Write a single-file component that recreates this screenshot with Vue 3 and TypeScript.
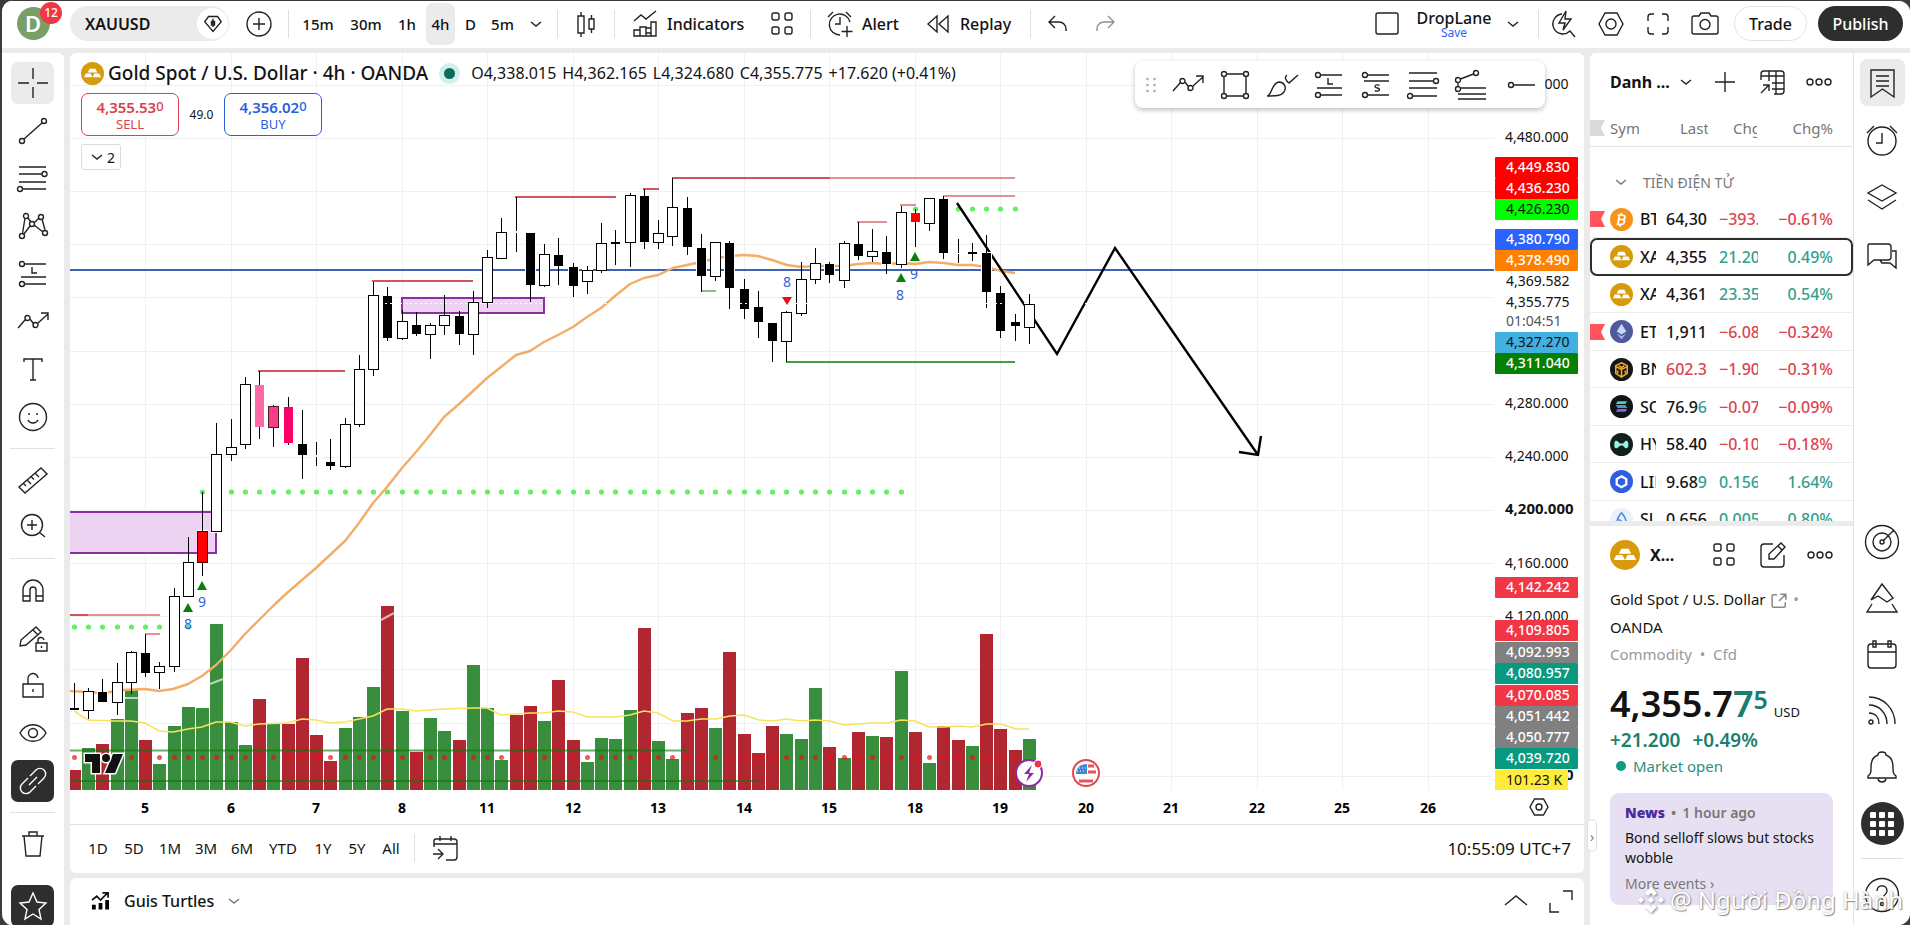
<script setup lang="ts">
type Candle = [number, number, number, number, string]

const c = (x: number, y: number, r: number): string =>
  `M${x - r} ${y}a${r} ${r} 0 1 0 ${2 * r} 0a${r} ${r} 0 1 0 ${-2 * r} 0`

const icons: Record<string, string> = {
  gem: 'M10 6h12l5 7-11 13L5 13z M16 9v11 M14 13v4M18 13v4M13 15h6M14 12.500h4v5h-4z',
  plusCircle: c(16, 16, 12) + 'M16 10v12M10 16h12',
  chevron: 'M11 14l5 4 5-4',
  chevronWide: 'M5 20l11-9 11 9',
  candles: 'M8 8h6v17H8zM11 4v4M11 25v4M19 11h5v10h-5zM21.500 7v4M21.500 21v4',
  indicators: 'M5 13l7-6 5 4 10-8M5 28v-6h6v6zM11 28v-9h6v9zM17 25h5M17 28V20h5v8zM22 28V14h5v14z',
  grid: 'M8 5h3a2 2 0 0 1 2 2v3a2 2 0 0 1-2 2H8a2 2 0 0 1-2-2V7a2 2 0 0 1 2-2zM21 5h3a2 2 0 0 1 2 2v3a2 2 0 0 1-2 2h-3a2 2 0 0 1-2-2V7a2 2 0 0 1 2-2zM8 19h3a2 2 0 0 1 2 2v3a2 2 0 0 1-2 2H8a2 2 0 0 1-2-2v-3a2 2 0 0 1 2-2zM21 19h3a2 2 0 0 1 2 2v3a2 2 0 0 1-2 2h-3a2 2 0 0 1-2-2v-3a2 2 0 0 1 2-2z',
  alertPlus: 'M26 14A10.500 10.500 0 1 0 16 27M16 9v7h-5M4 9l5-5M27 9l-5-5M23 18v11M17.500 23.500h11',
  alarm: c(16, 17, 14) + 'M16 9v10h-6M1 9l7-7M31 9l-7-7',
  replay: 'M15 8v16L6 16zM26 8v16l-9-8z',
  undo: 'M13 8l-6 6 6 6M7 14h10a7 7 0 0 1 7 7v2',
  redo: 'M19 8l6 6-6 6M25 14H15a7 7 0 0 0-7 7v2',
  layout: 'M6 5h18a2 2 0 0 1 2 2v17a2 2 0 0 1-2 2H6a2 2 0 0 1-2-2V7a2 2 0 0 1 2-2z',
  quick: 'M14 6A10 10 0 1 0 22 23l5 6M18 3l-7 12h6l-2 7 8-11h-6z',
  hex: 'M10 5h12l6 11-6 11H10L4 16z' + c(16, 16, 5),
  hexSmall: 'M11.500 8h9l4.500 8-4.500 8h-9L7 16z' + c(16, 16, 3),
  full: 'M12 6H9a3 3 0 0 0-3 3v4M20 6h3a3 3 0 0 1 3 3v4M12 26H9a3 3 0 0 1-3-3v-4M20 26h3a3 3 0 0 0 3-3v-4',
  camera: 'M5 8h5l2-3h8l2 3h5a2 2 0 0 1 2 2v14a2 2 0 0 1-2 2H5a2 2 0 0 1-2-2V10a2 2 0 0 1 2-2z' + c(16, 16.5, 5),
  cross: 'M1 16h11M20 16h11M16 1v11M16 20v11',
  trend: c(5, 26, 2.5) + c(27, 6, 2.5) + 'M7 24L25 8',
  fib: 'M2 5h27M2 12h23M2 20h27M5 27h24' + c(27.5, 12, 2.5) + c(3, 27, 2.5),
  pattern: c(5, 26, 2.5) + c(9, 6, 2.5) + c(15, 14, 2.5) + c(24, 7, 2.5) + c(28, 23, 2.5) + 'M5.500 23.500L8 8M11 8l3 4M7 24l6-8M17 13l5-5M17 15l9 7M25 9l3 11',
  long: c(5, 6, 2.5) + c(5, 26, 2.5) + 'M8 6h21M4 19h25M8 26h21M15 9v6h5',
  short: c(5, 6, 2.5) + c(5, 26, 2.5) + 'M8 6h21M4 12h25M8 26h21M19.500 16.500c-1-1-4.500-1-4.500 1s4.500 1 4.500 3-3.500 2-4.500 1',
  wave: 'M1 22l7-8M12.500 12.500l4 5M21 17l10-9M24 7h7v7' + c(10.5, 12, 2.5) + c(18.5, 19, 2.5),
  text: 'M7 9V6h18v3M16 6v21M13 27h6',
  smile: c(16, 16, 13.5) + 'M11 19c2 4 8 4 10 0M12 12v2M20 12v2',
  ruler: 'M2 23L24 4l6 6L8 29zM6 19l3 3M10 16l4 4M14 12.500l3 3M18 9l4 4',
  zoom: c(15, 15, 10.5) + 'M22 22l6 5M10 15h10M15 10v10',
  magnet: 'M6 27V16a10 10 0 0 1 20 0v11h-7V16a3 3 0 0 0-6 0v11zM6 22h7M19 22h7',
  pencil: 'M3 24l1-6L19 5l5 5L9 23zM16 8l5 5M19 21h11v8H19zM21 21v-2a3 3 0 0 1 6-1M24.500 24v2',
  lock: 'M6 14h20v13H6zM11 14V9a5 5 0 0 1 10-1M16 19v3',
  eye: 'M3 16c6-11 20-11 26 0-6 11-20 11-26 0z' + c(16, 16, 4.5),
  link: 'M13 11l6-6a5.500 5.500 0 0 1 8 8l-6 6M19 21l-6 6a5.500 5.500 0 0 1-8-8l6-6M12 20l8-8',
  trash: 'M5 8h22M7 8l2 20h14l2-20M12 8V4h8v4',
  star: 'M16 3l4 9 9 1-7 6.500 2 9.500-8-5-8 5 2-9.500L3 13l9-1z',
  rect: c(5, 5, 2.5) + c(27, 5, 2.5) + c(5, 27, 2.5) + c(27, 27, 2.5) + 'M8 5h16M8 27h16M5 8v16M27 8v16',
  brush: 'M1 27c5 0 4-13 12-14 5 0 8 5 5 10-3 4-8 4-17 4zM21 6c-3 2-1 6 2 8L32 6',
  channel: 'M2 4h28M2 12h25M2 19h28M5 27h25' + c(29, 12, 2.5) + c(3, 27, 2.5),
  speed: c(22, 4, 2.5) + c(4, 11, 2.5) + c(4, 20, 2.5) + 'M6.500 10l13-5M4 13.500v4M6.500 19H32M4 25h28M4 30h28',
  ray: c(10, 16, 2.5) + 'M12.500 16H34',
  plus: 'M16 6v20M6 16h20',
  table: 'M5 14V8a3 3 0 0 1 3-3h17a3 3 0 0 1 3 3v17a3 3 0 0 1-3 3h-7M5 10h23M13 5v10M20 5v23M28 17H16M28 23H16M5 27l8-8M7 19h6v6',
  more: c(7, 16, 3) + c(16, 16, 3) + c(25, 16, 3),
  bookmark: 'M5 3h23v27l-11.500-8L5 30zM10 9h13M10 14h13M10 19h13',
  layers: 'M16 4l14 8-14 8-14-8zM2 19l14 9 14-9',
  chat: 'M3 6h19a3 3 0 0 1 3 3v10a3 3 0 0 1-3 3H8l-6 5V7zM26 13h4v17l-6-5H16l-2-3',
  target: c(16, 16, 16.5) + c(16, 16, 9) + c(16, 16, 2) + 'M17 15L28 4',
  ideas: 'M16 2L5 18l7-4 9 6 6-4zM6 22L1 30h30l-5-8',
  calendar: 'M5 6h22a3 3 0 0 1 3 3v18a3 3 0 0 1-3 3H5a3 3 0 0 1-3-3V9a3 3 0 0 1 3-3zM2 14h28M7 3h3v6H7zM22 3h3v6h-3z',
  rss: 'M3 3c15 0 26 12 26 27M3 11c11 0 18 9 18 19M3 19c7 0 10 5 10 11' + c(5, 28, 2),
  bell: 'M2 26c3-2 3-4 3-9 0-8 4-11 7-12 0-4 8-4 8 0 3 1 7 4 7 12 0 5 0 7 3 9v2H2zM12 29c1 4 7 4 8 0',
  help: c(16, 16, 16.5) + 'M11 12c0-7 10-7 10 0 0 4-5 4-5 9' + c(16, 25, 1.5),
  edit: 'M17 5H8a3 3 0 0 0-3 3v17a3 3 0 0 0 3 3h17a3 3 0 0 0 3-3v-9M13 20v-5L25 4l4 4-11 12zM22 7l4 4',
  goto: 'M5 15V9a2 2 0 0 1 2-2h18a3 3 0 0 1 3 3v15a3 3 0 0 1-3 3h-8M5 12h23M11 4v5M22 4v5M4 22h9M9 17l5 5-5 5',
  external: 'M13 6H7a2 2 0 0 0-2 2v16a2 2 0 0 0 2 2h17a2 2 0 0 0 2-2v-6M18 5h9v9M27 5L16 16',
  expand: 'M18 6h9v9M5 18v9h9',
}

const intervals = ['15m', '30m', '1h', '4h', 'D', '5m']
const toolGroups: string[][] = [
  ['cross', 'trend', 'fib', 'pattern', 'long', 'wave', 'text', 'smile'],
  ['ruler', 'zoom'],
  ['magnet', 'pencil', 'lock', 'eye', 'link'],
  ['trash'],
  ['star'],
]
const favourites = ['wave', 'rect', 'brush', 'long', 'short', 'channel', 'speed', 'ray']
const ranges = ['1D', '5D', '1M', '3M', '6M', 'YTD', '1Y', '5Y', 'All']
const days = [5, 6, 7, 8, 11, 12, 13, 14, 15, 18, 19, 20, 21, 22, 25, 26]

const xAt = (i: number): number => 74.3 + i * 14.254
const px = (i: number): number => Math.floor(xAt(i))
const dayX = (i: number): number => px(5 + i * 6)
const gridRows = Array.from({ length: 14 }, (_, i) => Math.floor(85.3 + i * 53.15))

/* high, body top, body bottom, low, kind */
const candles: Candle[] = [
  [683, 708, 710, 710, 'k'], [688, 691, 711, 719, 'w'], [679, 692, 702, 702, 'k'], [663, 682, 703, 715, 'w'],
  [651, 652, 683, 694, 'w'], [634, 653, 673, 677, 'k'], [662, 666, 673, 689, 'w'], [588, 596, 667, 672, 'w'],
  [537, 562, 597, 597, 'w'], [492, 531, 563, 576, 'red'], [423, 454, 532, 532, 'w'], [419, 447, 455, 461, 'w'],
  [377, 384, 445, 449, 'w'], [371, 385, 427, 439, 'p1'], [405, 406, 428, 447, 'p2'], [397, 407, 443, 445, 'p3'],
  [410, 444, 455, 479, 'k'], [442, 455, 457, 466, 'n'], [439, 462, 466, 470, 'k'], [418, 424, 467, 468, 'w'],
  [355, 369, 425, 427, 'w'], [282, 295, 370, 376, 'w'], [287, 296, 338, 341, 'k'], [310, 321, 339, 340, 'w'],
  [312, 325, 334, 336, 'k'], [323, 325, 335, 359, 'w'], [295, 315, 326, 335, 'w'], [311, 316, 334, 345, 'k'],
  [291, 302, 335, 355, 'w'], [250, 257, 303, 308, 'w'], [218, 232, 259, 259, 'w'], [197, 231, 233, 252, 'n'],
  [233, 233, 285, 302, 'k'], [244, 254, 286, 287, 'w'], [238, 255, 266, 285, 'k'], [263, 267, 286, 297, 'k'],
  [266, 270, 282, 294, 'w'], [223, 243, 271, 273, 'w'], [230, 242, 244, 265, 'k'], [193, 195, 243, 267, 'w'],
  [189, 196, 242, 249, 'k'], [220, 233, 243, 249, 'w'], [178, 207, 237, 246, 'w'], [197, 208, 247, 255, 'k'],
  [234, 248, 276, 292, 'k'], [242, 242, 277, 281, 'w'], [241, 243, 288, 309, 'k'], [279, 289, 309, 319, 'k'],
  [291, 307, 322, 338, 'k'], [323, 323, 341, 362, 'k'], [311, 312, 342, 362, 'w'], [262, 279, 314, 316, 'w'],
  [248, 263, 280, 284, 'w'], [262, 264, 275, 283, 'k'], [241, 243, 281, 288, 'w'], [222, 244, 256, 260, 'k'],
  [229, 251, 257, 262, 'w'], [236, 252, 264, 274, 'k'], [206, 212, 265, 268, 'w'], [209, 213, 222, 247, 'redk'],
  [198, 198, 224, 231, 'w'], [196, 199, 253, 259, 'k'], [239, 253, 254, 263, 'n'], [243, 252, 254, 261, 'k'],
  [235, 253, 292, 308, 'k'], [286, 293, 331, 338, 'k'], [314, 322, 326, 341, 'k'], [294, 304, 328, 344, 'w'],
]
const outlined = (k: string): boolean => k === 'w' || k === 'red' || k === 'p2'

const volumeTops = [
  770, 748, 744, 719, 689, 740, 764, 726, 707, 708, 624, 722, 745, 699, 723, 724, 658, 735, 761, 728, 717, 687, 606,
  711, 752, 718, 731, 740, 665, 708, 760, 715, 706, 721, 680, 740, 762, 738, 739, 710, 628, 741, 759, 713, 708, 728,
  652, 734, 753, 726, 734, 739, 688, 747, 758, 732, 736, 737, 671, 732, 763, 726, 740, 746, 634, 729, 750, 739,
]
const volumeSides = 'rgrggrgggggggrgrrrrgggrgrggrgggrrgrrggggrggrrgrrrrgggrgrgrgrgrrgrrrg'

const dots: [number, number][] = [
  ...[0, 1, 2, 3, 4, 5, 6, 8].map((i): [number, number] => [i, 627]),
  [9, 492],
  ...Array.from({ length: 48 }, (_, k): [number, number] => [k + 11, 492]),
  ...[59, 62, 63, 64, 65, 66].map((i): [number, number] => [i, 209]),
]

/* x1, x2, y, class */
const levels: [number, number, number, string][] = [
  [258, 345, 371, 'high'], [70, 88, 615, 'high'], [88, 160, 615, 'soft'], [145, 160, 634, 'soft'],
  [372, 473, 281, 'high'], [515, 616, 197, 'high'], [643, 659, 189, 'high'], [672, 830, 178, 'high'],
  [830, 1015, 178, 'soft'], [857, 887, 222, 'soft'], [900, 916, 205, 'soft'], [943, 1015, 196, 'soft'],
  [701, 716, 291, 'lowsoft'], [786, 1015, 362, 'low'],
]

const average =
  '70,691 103,693 123,690 145,689 159,691 173,689 188,684 202,676 216,665 230,651 245,634 259,620 273,606 287,593 302,580 316,568 330,555 345,541 359,523 373,503 387,487 402,468 416,452 430,435 444,417 459,404 473,391 487,378 501,367 516,355 530,351 544,342 558,335 573,327 587,317 601,308 615,296 630,284 644,278 658,275 673,268 687,265 701,262 717,258 730,256 744,255 758,256 772,260 787,265 801,267 815,266 830,266 844,266 858,264 872,263 886,264 901,263 915,264 929,262 944,263 958,265 972,265 986,267 1001,271 1015,273'
const volumeAverage =
  '74,711 88,720 116,721 131,721 145,723 159,731 173,732 188,729 202,727 216,722 230,722 245,726 259,724 287,723 302,719 316,720 330,723 345,722 373,716 387,709 402,709 416,711 444,709 473,708 487,708 501,715 530,713 544,713 558,711 573,712 587,717 615,717 630,715 644,711 658,713 673,721 687,721 701,719 716,719 730,716 744,715 759,720 773,721 786,719 801,721 815,720 830,721 844,725 858,724 873,723 887,723 901,720 915,721 929,727 944,727 958,726 972,727 987,724 1001,724 1016,729 1029,729'

/* text, centre y, background, text colour */
const priceTags: [string, number, string, string][] = [
  ['4,449.830', 167, '#ff0000', '#fff'], ['4,436.230', 188, '#ff0000', '#fff'], ['4,426.230', 209, '#00ff00', '#111'],
  ['4,380.790', 239, '#2962ff', '#fff'], ['4,378.490', 260, '#ff8000', '#fff'], ['4,369.582', 281, '#fff', '#111'],
  ['4,355.775', 302, '#fff', '#111'], ['01:04:51', 321, '#fff', '#555'], ['4,327.270', 342, '#41b1e1', '#111'],
  ['4,311.040', 363, '#058005', '#fff'], ['4,142.242', 587, '#f23645', '#fff'], ['4,109.805', 630, '#f23645', '#fff'],
  ['4,092.993', 652, '#808080', '#fff'], ['4,080.957', 673, '#089981', '#fff'], ['4,070.085', 695, '#f23645', '#fff'],
  ['4,051.442', 716, '#808080', '#fff'], ['4,050.777', 737, '#808080', '#fff'], ['4,039.720', 758, '#089981', '#fff'],
]
const ticks: [string, number, boolean][] = [
  ['4,520.000', 84, false], ['4,480.000', 137, false], ['4,280.000', 403, false], ['4,240.000', 456, false],
  ['4,200.000', 509, true], ['4,160.000', 563, false], ['4,120.000', 616, false], ['4,000.000', 775, true],
]

interface Row { sym: string; icon: string; last: string; tail?: string; chg: string; pct: string; up: boolean; flag?: boolean; active?: boolean; lastDown?: boolean }
const rows: Row[] = [
  { sym: 'BTC', icon: 'btc', last: '64,30', chg: '−393.', pct: '−0.61%', up: false, flag: true },
  { sym: 'XAU', icon: 'gold', last: '4,355', chg: '21.20', pct: '0.49%', up: true, active: true },
  { sym: 'XAU', icon: 'gold', last: '4,361', chg: '23.35', pct: '0.54%', up: true },
  { sym: 'ETH', icon: 'eth', last: '1,911', chg: '−6.08', pct: '−0.32%', up: false, flag: true },
  { sym: 'BNB', icon: 'bnb', last: '602.3', chg: '−1.90', pct: '−0.31%', up: false, lastDown: true },
  { sym: 'SOL', icon: 'sol', last: '76.9', tail: '6', chg: '−0.07', pct: '−0.09%', up: false },
  { sym: 'HYP', icon: 'hype', last: '58.40', chg: '−0.10', pct: '−0.18%', up: false },
  { sym: 'LINK', icon: 'link', last: '9.68', tail: '9', chg: '0.156', pct: '1.64%', up: true },
  { sym: 'SUI', icon: 'sui', last: '0.656', chg: '0.005', pct: '0.80%', up: true },
]
const railTop = ['bookmark', 'alarm', 'layers', 'chat']
const railBottom = ['target', 'ideas', 'calendar', 'rss', 'bell']
</script>

<template>
  <div class="app">
    <header class="topbar">
      <button class="avatar" aria-label="Account"><span class="face">D</span><span class="badge">12</span></button>
      <div class="search">
        <button class="symbol">XAUUSD</button>
        <button class="gem" aria-label="Symbol type"><svg class="ic"><path :d="icons.gem" /></svg></button>
      </div>
      <button class="b59" aria-label="Compare"><svg class="ic"><path :d="icons.plusCircle" /></svg></button>
      <i class="sep"></i>
      <nav class="intervals">
        <button v-for="t in intervals" :key="t" :class="['iv', 'iv-' + t, { on: t === '4h' }]">{{ t }}</button>
        <button class="b30" aria-label="More intervals"><svg class="ic"><path :d="icons.chevron" /></svg></button>
      </nav>
      <i class="sep"></i>
      <button class="b56" aria-label="Chart type"><svg class="ic"><path :d="icons.candles" /></svg></button>
      <i class="sep"></i>
      <button class="labelled indicators"><svg class="ic"><path :d="icons.indicators" /></svg>Indicators</button>
      <button class="b56" aria-label="Templates"><svg class="ic"><path :d="icons.grid" /></svg></button>
      <i class="sep"></i>
      <button class="labelled alert"><svg class="ic"><path :d="icons.alertPlus" /></svg>Alert</button>
      <button class="labelled replay"><svg class="ic"><path :d="icons.replay" /></svg>Replay</button>
      <i class="sep"></i>
      <button class="b48 undo" aria-label="Undo"><svg class="ic"><path :d="icons.undo" /></svg></button>
      <button class="b48 faded" aria-label="Redo"><svg class="ic"><path :d="icons.redo" /></svg></button>
      <div class="right">
        <button class="b48" aria-label="Layout"><svg class="ic"><path :d="icons.layout" /></svg></button>
        <button class="saved"><span>DropLane</span><small>Save</small></button>
        <button class="b30" aria-label="Manage layouts"><svg class="ic"><path :d="icons.chevron" /></svg></button>
        <i class="sep"></i>
        <button class="b48" aria-label="Quick search"><svg class="ic"><path :d="icons.quick" /></svg></button>
        <button class="b48" aria-label="Settings"><svg class="ic"><path :d="icons.hex" /></svg></button>
        <button class="b48" aria-label="Fullscreen"><svg class="ic"><path :d="icons.full" /></svg></button>
        <button class="b48" aria-label="Snapshot"><svg class="ic"><path :d="icons.camera" /></svg></button>
        <button class="pill trade">Trade</button>
        <button class="pill publish">Publish</button>
      </div>
    </header>

    <div class="body">
      <aside class="tools">
        <div v-for="(g, gi) in toolGroups" :key="gi" :class="['group', 'g' + gi]">
          <button v-for="t in g" :key="t" :aria-label="t" :class="{ lit: t === 'cross', dark: t === 'link' || t === 'star' }">
            <svg class="ic"><path :d="icons[t]" /></svg>
          </button>
        </div>
      </aside>

      <main class="centre">
        <section class="chart">
          <div class="plotrow">
            <div class="plot">
              <svg class="canvas" role="img" aria-label="Gold Spot candles">
                <g transform="translate(-70 -53)">
                  <g class="grid">
                    <path v-for="(d, i) in days" :key="d" :d="`M${dayX(i)}.5 53V790`" />
                    <path v-for="y in gridRows" :key="y" :d="`M70 ${y}.5H3000`" />
                  </g>
                  <rect class="zone" x="60" y="512" width="156" height="41" />
                  <rect class="zone" x="402" y="298" width="142" height="15" />
                  <rect
                    v-for="(t, i) in volumeTops" :key="'v' + i" :class="volumeSides[i] === 'g' ? 'vg' : 'vr'"
                    :x="px(i) - 6" :y="t" width="13" :height="790 - t"
                  />
                  <path class="faint" d="M124 698h14M210 684l13-5M381 620l13-7" />
                  <path class="volline" d="M70 750.500H687M70 781H759" />
                  <circle v-for="i in 67" :key="'r' + i" class="reddot" :cx="px(i - 1) + 0.5" cy="757.5" r="2.5" />
                  <polyline class="vma" :points="volumeAverage" />
                  <circle v-for="(d, i) in dots" :key="'d' + i" class="greendot" :cx="px(d[0]) + 0.5" :cy="d[1]" r="2.6" />
                  <path v-for="(l, i) in levels" :key="'l' + i" :class="['level', l[3]]" :d="`M${l[0]} ${l[2]}H${l[1]}`" />
                  <path class="blue" d="M70 270H3000" />
                  <polyline class="ma" :points="average" />
                  <path class="drawn" d="M957 203L1057 354L1115 248L1258 455M1239 452L1258 455L1261 436" />
                  <g v-for="(k, i) in candles" :key="'c' + i" :class="['candle', k[4]]">
                    <rect class="halo" :x="px(i) - 5" :y="k[1] - 1" width="11" :height="k[2] - k[1] + 2" />
                    <path :d="`M${px(i) + 0.5} ${k[0]}V${k[1]}M${px(i) + 0.5} ${k[2]}V${k[3]}`" />
                    <rect
                      v-if="outlined(k[4])" class="bodyrect" :x="px(i) - 4.5" :y="k[1] + 0.5" width="10"
                      :height="k[2] - k[1] - 1"
                    />
                    <rect v-else class="bodyrect" :x="px(i) - 4" :y="k[1]" width="9" :height="k[2] - k[1]" />
                  </g>
                  <path class="lastprice" d="M70 303.500H3000" />
                  <g class="up">
                    <path d="M202 581l5 9h-10zM188 603l5 9h-10zM915 252l5 9h-10zM901 273l5 9h-10z" />
                  </g>
                  <path class="down" d="M787 305l5-8h-10z" />
                  <g class="count">
                    <text x="202" y="607">9</text><text x="188" y="629">8</text><text x="787" y="287">8</text>
                    <text x="914" y="279">9</text><text x="900" y="300">8</text>
                  </g>
                  <g class="brand">
                    <path d="M85 754h15v19h-8v-11h-7zM113 754h10l-8 19h-10z" />
                    <circle cx="106" cy="758" r="4" />
                  </g>
                  <g class="bolt">
                    <circle cx="1029" cy="773" r="13" />
                    <path d="M1032 765l-8 9h5l-3 8 8-9h-5z" />
                    <circle class="notify" cx="1038" cy="764" r="4" />
                  </g>
                  <g class="flag">
                    <circle cx="1086" cy="773" r="13" />
                    <path class="stripes" d="M1088 766h6M1088 772h8M1079 781h14" />
                    <path class="canton" d="M1076 774c0-6 4-10 11-10v10z" />
                    <path class="stars" d="M1079 768h7M1077 771h9" />
                  </g>
                </g>
              </svg>

              <div class="legend">
                <div class="titleline">
                  <svg class="gold" viewBox="0 0 24 24"><circle cx="12" cy="12" r="12" /><path d="M9 7h6l2 4H7zM5 12h5l2 4H3zM14 12h5l2 4h-9z" /></svg>
                  <h1>Gold Spot / U.S. Dollar · 4h · OANDA</h1>
                  <span class="status"></span>
                  <p class="ohlc"><span>O4,338.015</span><span>H4,362.165</span><span>L4,324.680</span><span>C4,355.775</span><span>+17.620 (+0.41%)</span></p>
                </div>
                <div class="deal">
                  <button class="sell"><b>4,355.53<sup>0</sup></b><span>SELL</span></button>
                  <span class="spread">49.0</span>
                  <button class="buy"><b>4,356.02<sup>0</sup></b><span>BUY</span></button>
                </div>
                <button class="collapse"><svg class="ic"><path :d="icons.chevron" /></svg>2</button>
              </div>
            </div>

            <svg class="axis" role="img" aria-label="Price scale">
              <g transform="translate(-1494 -53)">
                <text v-for="t in ticks" :key="t[0]" :class="{ strong: t[2] }" x="1505" :y="t[1] + 5">{{ t[0] }}</text>
                <g v-for="t in priceTags" :key="t[0]">
                  <rect x="1495" :y="t[1] - 10" width="83" height="21" rx="1" :fill="t[2]" />
                  <text x="1506" :y="t[1] + 5" :fill="t[3]">{{ t[0] }}</text>
                </g>
                <rect x="1495" y="770" width="73" height="20" fill="#ffeb3b" />
                <text x="1506" y="785">101.23 K</text>
              </g>
            </svg>

            <div class="favbar">
              <svg class="grip" viewBox="0 0 10 16"><circle v-for="n in 6" :key="n" :cx="n % 2 ? 1.5 : 8.5" :cy="Math.floor((n - 1) / 2) * 6 + 2" r="1.3" /></svg>
              <button v-for="f in favourites" :key="f" :aria-label="f"><svg class="ic"><path :d="icons[f]" /></svg></button>
            </div>
          </div>

          <div class="timeaxis">
            <svg class="times" role="img" aria-label="Time scale">
              <text v-for="(d, i) in days" :key="d" :x="dayX(i) - 70" y="23">{{ d }}</text>
            </svg>
            <button aria-label="Scale settings"><svg class="ic"><path :d="icons.hexSmall" /></svg></button>
          </div>

          <footer class="rangebar">
            <button v-for="r in ranges" :key="r" :class="['range', 'r' + r]">{{ r }}</button>
            <i class="sep"></i>
            <button class="b48" aria-label="Go to date"><svg class="ic"><path :d="icons.goto" /></svg></button>
            <button class="clock">10:55:09 UTC+7</button>
          </footer>
        </section>

        <section class="strategy">
          <svg class="strategyicon" viewBox="0 0 20 20"><path d="M1 14h4v5H1zM8 12h4v7H8zM15 9h4v10h-4z" /><path class="stroke" d="M1 9l5-4 4 4 7-7M12 1.500h6v5" /></svg>
          <button class="name">Guis Turtles<svg class="ic"><path :d="icons.chevron" /></svg></button>
          <span class="fill"></span>
          <button aria-label="Open panel"><svg class="ic"><path :d="icons.chevronWide" /></svg></button>
          <button aria-label="Maximize panel"><svg class="ic"><path :d="icons.expand" /></svg></button>
        </section>
      </main>

      <aside class="side">
        <div class="panel">
          <section class="watch">
            <div class="watchhead">
              <button class="listname">Danh ...</button>
              <svg class="ic"><path :d="icons.chevron" /></svg>
              <button aria-label="Add symbol"><svg class="ic"><path :d="icons.plus" /></svg></button>
              <button aria-label="Table view"><svg class="ic"><path :d="icons.table" /></svg></button>
              <button aria-label="More"><svg class="ic"><path :d="icons.more" /></svg></button>
            </div>
            <table>
              <thead>
                <tr>
                  <th class="c1"><svg class="pin grey" viewBox="0 0 15 16"><path d="M0 0h15l-4 8 4 8H0z" /></svg></th>
                  <th class="c2"><div class="clip symhead">Sym</div></th>
                  <th class="c3"><div class="clip lasthead">Last</div></th>
                  <th class="c4"><div class="clip chghead">Chg</div></th>
                  <th class="c5">Chg%</th>
                </tr>
              </thead>
              <tbody>
                <tr class="section"><td colspan="5"><button><svg class="ic"><path :d="icons.chevron" /></svg>TIỀN ĐIỆN TỬ</button></td></tr>
                <tr v-for="(r, i) in rows" :key="i" :class="['quote', r.up ? 'rise' : 'fall', { active: r.active }]">
                  <td class="c1">
                    <div class="mark">
                      <svg class="pin" viewBox="0 0 15 16"><path v-if="r.flag" d="M0 0h15l-4 8 4 8H0z" /></svg>
                      <svg class="coin" viewBox="0 0 24 24">
                        <template v-if="r.icon === 'btc'"><circle cx="12" cy="12" r="12" fill="#f7931a" /><path d="M10 7l-2 10M8 7.500h5c4 0 3 4.500 0 4.500H9.500M12 12c5 0 3 5 0 5H7M12 5l-.5 2.500M11 17l-.5 2.500" class="coinline" /></template>
                        <template v-else-if="r.icon === 'gold'"><circle cx="12" cy="12" r="12" fill="#d79a0b" /><path d="M9 7h6l2 4H7zM5 12h5l2 4H3zM14 12h5l2 4h-9z" fill="#fff" /></template>
                        <template v-else-if="r.icon === 'eth'"><circle cx="12" cy="12" r="12" fill="#4f5a9c" /><path d="M12 4l5 8-5 3-5-3z" fill="#c9d6f5" /><path d="M7 14l5 3 5-3-5 6z" fill="#a6b9ec" /></template>
                        <template v-else-if="r.icon === 'bnb'"><circle cx="12" cy="12" r="12" fill="#171717" /><path d="M12 5l6 3v8l-6 4-6-4V8zM6 9l6 3 6-3M12 12v7M9 8l3 2 3-2M8 13v3M16 13v3" fill="none" stroke="#f0a92a" stroke-width="1.6" /></template>
                        <template v-else-if="r.icon === 'sol'"><circle cx="12" cy="12" r="12" fill="#101418" /><path d="M8 6.500h10l-2 3H6z" fill="#3fd6b0" /><path d="M6 10.500h10l2 3H8z" fill="#5a8fd8" /><path d="M8 14.500h10l-2 3H6z" fill="#7d6be0" /></template>
                        <template v-else-if="r.icon === 'hype'"><circle cx="12" cy="12" r="12" fill="#10201f" /><path d="M6 8c3 0 3 3 6 3s3-3 5-3c3 0 3 8 0 8-2 0-2-3-5-3s-3 3-6 3c-2 0-2-8 0-8z" fill="#9af0df" /></template>
                        <template v-else-if="r.icon === 'link'"><circle cx="12" cy="12" r="12" fill="#2f5fe0" /><path d="M12 6.500l5 3v5.500l-5 3-5-3V9.500z" fill="none" stroke="#fff" stroke-width="2.4" /></template>
                        <template v-else><circle cx="12" cy="12" r="12" fill="#e9f1fb" /><path d="M12 5c7 8 5 13 0 13s-7-5 0-13zM8 12c4 0 4 4 8 3" fill="none" stroke="#4d88e8" stroke-width="1.6" /></template>
                      </svg>
                    </div>
                  </td>
                  <td class="c2"><div class="clip sym">{{ r.sym }}</div></td>
                  <td class="c3"><div :class="['clip', { dn: r.lastDown }]">{{ r.last }}<span v-if="r.tail" class="tail">{{ r.tail }}</span></div></td>
                  <td class="c4 tone"><div class="clip chg">{{ r.chg }}</div></td>
                  <td class="c5 tone">{{ r.pct }}</td>
                </tr>
              </tbody>
            </table>
          </section>

          <section class="detail">
            <div class="detailhead">
              <svg class="gold big" viewBox="0 0 24 24"><circle cx="12" cy="12" r="12" /><path d="M9 7h6l2 4H7zM5 12h5l2 4H3zM14 12h5l2 4h-9z" /></svg>
              <h2>X...</h2>
              <button aria-label="Widgets"><svg class="ic"><path :d="icons.grid" /></svg></button>
              <button aria-label="Edit"><svg class="ic"><path :d="icons.edit" /></svg></button>
              <button aria-label="More"><svg class="ic"><path :d="icons.more" /></svg></button>
            </div>
            <p class="desc">Gold Spot / U.S. Dollar <svg class="ext" viewBox="0 0 32 32"><path :d="icons.external" /></svg> <span class="muted">•</span><br>OANDA</p>
            <p class="kind">Commodity&nbsp; • &nbsp;Cfd</p>
            <div class="price"><b>4,355.7<em>7</em></b><sup>5</sup><span>USD</span></div>
            <div class="change"><span>+21.200</span><span>+0.49%</span></div>
            <p class="open">Market open</p>
            <article class="news">
              <p class="newshead"><b>News</b><i>•</i><span>1 hour ago</span></p>
              <p>Bond selloff slows but stocks wobble</p>
              <a href="#">More events ›</a>
            </article>
          </section>
        </div>

        <nav class="rail">
          <div class="railtop">
            <button v-for="r in railTop" :key="r" :aria-label="r" :class="{ lit: r === 'bookmark' }"><svg class="ic"><path :d="icons[r]" /></svg></button>
          </div>
          <div class="railbottom">
            <button v-for="r in railBottom" :key="r" :aria-label="r"><svg class="ic"><path :d="icons[r]" /></svg></button>
            <button class="apps" aria-label="Products"><svg viewBox="0 0 24 24"><rect v-for="n in 9" :key="n" :x="((n - 1) % 3) * 9" :y="Math.floor((n - 1) / 3) * 9" width="6" height="6" rx="1" /></svg></button>
            <i class="rule"></i>
            <button aria-label="Help"><svg class="ic"><path :d="icons.help" /></svg></button>
          </div>
        </nav>
        <button class="handle" aria-label="Hide panel">›</button>
      </aside>
    </div>

    <div class="watermark">
      <svg viewBox="0 0 28 28"><path d="M14 1l6 6-3 3-3-3-3 3-3-3zM4 11l3 3-3 3-3-3zM14 11l3 3-3 3-3-3zM24 11l3 3-3 3-3-3zM8 21l3-3 3 3 3-3 3 3-6 6z" /></svg>
      <span>@ Người Đồng Hành</span>
    </div>
  </div>
</template>

<style>
html, body { background: #3b3b3b; }
body { overflow: hidden; }
</style>

<style scoped>
.app, .app * { box-sizing: border-box; }
.app {
  position: relative; height: 100vh; display: flex; flex-direction: column; gap: 5px; overflow: hidden;
  border: solid #3b3b3b; border-width: 1px 0 0 2px; border-radius: 12px; background: #ebebeb;
  color: #131313; font-family: "Noto Sans", "Open Sans", sans-serif; font-size: 15px;
}
button { padding: 0; border: 0; background: none; color: inherit; font: inherit; display: flex; align-items: center; justify-content: center; flex: none; }
p, h1, h2 { margin: 0; }
.ic { width: 32px; height: 32px; flex: none; overflow: visible; }
.ic path, .ext path { fill: none; stroke: #222; stroke-width: 1.4; }
.sep { width: 1px; height: 28px; background: #dedede; flex: none; }

.topbar { height: 47px; flex: none; display: flex; align-items: center; background: #fff; font-size: 16px; font-weight: 500; padding-bottom: 2px; }
.avatar { width: 68px; height: 45px; position: relative; }
.face { width: 33px; height: 33px; margin-right: 6px; border-radius: 50%; background: #789f66; color: #fff; font-size: 22px; font-weight: 600; line-height: 33px; }
.badge { position: absolute; top: 1px; right: 8px; width: 22px; height: 22px; border-radius: 50%; background: #f23645; color: #fff; font-size: 12px; line-height: 22px; }
.search { width: 159px; height: 35px; flex: none; display: flex; align-items: center; justify-content: space-between; padding: 0 1px 0 15px; border-radius: 18px; background: #ebebeb; }
.symbol { font-weight: 600; }
.gem { width: 31px; height: 31px; border-radius: 50%; background: #fff; }
.gem .ic { width: 24px; height: 24px; }
.gem .ic path { transform: scale(0.75); stroke-width: 1.8; }
.b59 { width: 59px; }
.b56 { width: 56px; }
.b48 { width: 47px; }
.b30 { width: 30px; }
.undo { margin-left: 3px; }
.faded { opacity: 0.5; }
.intervals { display: flex; align-items: center; padding: 0 6px 0 5px; }
.iv { height: 42px; width: 48px; border-radius: 7px; font-size: 15px; }
.iv-1h { width: 34px; }
.iv-4h { width: 29px; margin: 0 2px; }
.iv-D { width: 27px; }
.iv-5m { width: 37px; }
.iv.on { background: #ebebeb; }
.labelled { gap: 6px; justify-content: flex-start; }
.indicators { width: 139px; padding-left: 14px; }
.alert { width: 102px; padding-left: 13px; }
.replay { width: 117px; padding-left: 9px; }
.right { margin-left: auto; display: flex; align-items: center; padding-right: 7px; }
.saved { width: 86px; flex-direction: column; line-height: 18px; }
.saved small { font-size: 12px; line-height: 12px; color: #2962ff; font-weight: 400; }
.saved + .b30 { margin: 0 10px 0 1px; }
.right .sep + .b48 { margin-left: 1px; }
.pill { height: 35px; border-radius: 18px; }
.trade { width: 73px; margin: 0 11px 0 6px; border: 1px solid #e2e2e2; }
.publish { width: 85px; background: #2e2e2e; color: #fff; }

.body { flex: 1; min-height: 0; display: flex; gap: 6px; }
.tools { width: 62px; flex: none; background: #fff; border-radius: 0 6px 0 0; padding: 9px 1px 0 0; display: flex; flex-direction: column; align-items: center; }
.group { display: flex; flex-direction: column; justify-content: space-between; align-items: center; width: 45px; flex: none; }
.group button { width: 43px; height: 42px; border-radius: 7px; }
.g0 { height: 376px; }
.g1 { height: 111px; margin-top: 10px; padding: 10px 0 11px; border: solid #e0e0e0; border-width: 1px 0; }
.g2 { height: 253px; padding: 10px 0; }
.g3 { border-top: 1px solid #e0e0e0; padding: 10px 0 20px; }
.lit { background: #ebebeb; }
.dark { background: #2e2e2e; }
.dark .ic path { stroke: #fff; }

.centre { flex: 1; min-width: 0; display: flex; flex-direction: column; gap: 5px; }
.chart { flex: 1; min-height: 0; display: flex; flex-direction: column; background: #fff; border-radius: 6px; }
.plotrow { position: relative; flex: 1; min-height: 0; display: flex; }
.plot { position: relative; flex: 1; min-width: 0; overflow: hidden; border-radius: 6px 0 0 0; }
.canvas { position: absolute; inset: 0; width: 100%; height: 100%; }
.axis { width: 90px; height: 100%; flex: none; font-size: 14px; }
.axis text { fill: currentColor; }
.axis text[fill="#fff"] { fill: #fff; font-weight: 500; }
.axis text[fill="#555"] { fill: #555; }
.axis .strong { font-weight: 700; font-size: 15px; }
.grid path { stroke: #f0f0f0; fill: none; }
.zone { fill: #ebd3f1; stroke: #8e2da4; stroke-width: 2; }
.vg { fill: #388e3c; }
.vr { fill: #b02731; }
.faint { stroke: #fff; stroke-width: 2; opacity: 0.65; }
.volline { stroke: #0a7a0a; stroke-width: 2; opacity: 0.6; }
.reddot { fill: #ee1010; opacity: 0.7; }
.vma { fill: none; stroke: #f8e45c; stroke-width: 1.6; }
.greendot { fill: #63ee63; }
.level { stroke-width: 2; fill: none; }
.high { stroke: #d2555c; }
.soft { stroke: #e29296; }
.low { stroke: #43a047; }
.lowsoft { stroke: #84c087; }
.blue { stroke: #3b62b4; stroke-width: 2; }
.ma { fill: none; stroke: #f3ad68; stroke-width: 2.4; stroke-linejoin: round; }
.drawn { fill: none; stroke: #000; stroke-width: 2.4; }
.halo { fill: #fff; }
.candle path { stroke: #000; }
.bodyrect { fill: #000; }
.w .bodyrect { fill: #fff; stroke: #000; }
.n .bodyrect { fill: none; }
.red .bodyrect { fill: #ff0000; stroke: #500; }
.redk .bodyrect { fill: #ff0000; }
.p1 .bodyrect { fill: #ff69a5; }
.p2 .bodyrect { fill: #f93c85; stroke: #4a2020; }
.p3 .bodyrect { fill: #ff0068; }
.lastprice { stroke: #fff; stroke-dasharray: 2 3; }
.up { fill: #068006; }
.down { fill: #ef0e0e; }
.count { fill: #2f62d8; font-size: 14px; text-anchor: middle; }
.brand { fill: #111; stroke: #fff; stroke-width: 3; paint-order: stroke; }
.bolt circle { fill: #fff; stroke: #8b2ba3; stroke-width: 2; }
.bolt path { fill: #8b2ba3; }
.bolt .notify { fill: #f23645; stroke: #fff; stroke-width: 1; }
.flag circle { fill: #fff; stroke: #e0484f; stroke-width: 2; }
.stripes { stroke: #e5555c; stroke-width: 3; }
.canton { fill: #3f86cf; }
.stars { stroke: #fff; stroke-dasharray: 1 2; }

.legend { position: relative; padding: 7px 0 0 11px; display: flex; flex-direction: column; align-items: flex-start; }
.titleline { display: flex; align-items: center; height: 26px; margin-bottom: 7px; }
.gold { width: 23px; height: 23px; flex: none; margin-right: 4px; }
.gold circle { fill: #d79a0b; }
.gold path { fill: #fff; }
h1 { font-size: 19px; font-weight: 500; line-height: 26px; white-space: nowrap; }
.status { width: 21px; height: 21px; margin: 0 11px; border: 5px solid #d3efea; border-radius: 50%; background: #0c6b5e; }
.ohlc { display: flex; gap: 6px; font-size: 16px; white-space: nowrap; }
.deal { display: flex; align-items: center; }
.deal button { width: 98px; height: 43px; flex-direction: column; border: 1px solid; border-radius: 7px; background: #fff; font-size: 13px; line-height: 16px; }
.deal b { font-size: 15px; font-weight: 600; line-height: 18px; }
.deal sup { font-size: 13px; font-weight: 500; line-height: 0; vertical-align: 2px; }
.sell { color: #d8414d; }
.buy { color: #2a5fdc; }
.spread { width: 45px; text-align: center; font-size: 12px; }
.collapse { width: 40px; height: 26px; margin-top: 8px; border: 1px solid #dcdcdc; border-radius: 3px; background: #fff; font-size: 14px; }
.collapse .ic { width: 26px; margin-left: -6px; }
.favbar { position: absolute; top: 8px; right: 39px; display: flex; align-items: center; height: 47px; padding: 0 5px 0 11px; border-radius: 8px; background: #fff; box-shadow: 0 2px 5px rgba(0, 0, 0, 0.25); }
.favbar button { width: 47px; height: 44px; }
.grip { width: 10px; height: 16px; margin-right: 8px; fill: #aaa; }

.timeaxis { height: 35px; flex: none; display: flex; border-bottom: 1px solid #e3e3e3; }
.times { flex: 1; min-width: 0; height: 34px; font-size: 14px; font-weight: 700; text-anchor: middle; }
.timeaxis button { width: 90px; }
.rangebar { height: 48px; flex: none; display: flex; align-items: center; padding: 0 13px 2px 10px; font-size: 15px; }
.range { width: 36px; }
.range.rYTD { width: 46px; }
.range.r1Y, .range.r5Y, .range.rAll { width: 34px; }
.rangebar .sep { margin: 0 6px; }
.clock { margin-left: auto; font-size: 17px; }
.strategy { height: 47px; flex: none; display: flex; align-items: center; padding: 0 1px 2px 21px; border-radius: 6px 6px 0 0; background: #fff; }
.strategyicon { width: 19px; height: 20px; margin-right: 14px; }
.stroke { fill: none; stroke: #111; stroke-width: 1.8; }
.name { font-size: 16px; font-weight: 500; gap: 4px; }
.name .ic path { stroke: #777; }
.fill { flex: 1; }
.strategy > button:not(.name) { width: 45px; }

.side { position: relative; width: 320px; flex: none; display: flex; background: #fff; border-radius: 6px 0 0 0; }
.panel { width: 263px; flex: none; display: flex; flex-direction: column; gap: 5px; background: #ebebeb; border-radius: 6px 0 0 0; }
.watch { height: 468px; flex: none; overflow: hidden; background: #fff; border-radius: 6px 0 0 0; }
.watchhead { height: 57px; display: flex; align-items: center; padding-left: 20px; }
.listname { width: 60px; justify-content: flex-start; font-size: 16px; font-weight: 700; white-space: nowrap; }
.watchhead button:not(.listname) { width: 47px; }
.watchhead button:nth-of-type(2) { margin-left: 2px; }
.listname + .ic { width: 29px; }
table { width: 263px; table-layout: fixed; border-collapse: separate; border-spacing: 0; font-size: 16px; }
th { height: 37px; padding: 0; border-bottom: 1px solid #e3e3e3; font-weight: 400; color: #767676; text-align: left; font-size: 15px; }
td { padding: 0; font-weight: 500; }
.clip { overflow: hidden; white-space: nowrap; }
.c1 { width: 50px; }
.c2 { width: 26px; }
.c3 { width: 53px; }
.c4 { width: 49px; }
.c5 { width: 85px; text-align: right; padding-right: 20px; }
.c2 .clip { width: 16px; }
.c2 .symhead { width: 29px; margin-left: -30px; }
.c3 .clip { width: 46px; }
.c3 .lasthead { width: 28px; margin-left: 14px; }
.c4 .clip { width: 39px; }
.c4 .chghead { width: 24px; margin-left: 14px; }
.pin { width: 15px; height: 16px; flex: none; fill: #ff5459; display: block; }
.pin.grey { fill: #d9dadd; }
.section td { height: 54px; padding-top: 16px; font-weight: 400; }
.section button { margin-left: 15px; gap: 6px; color: #777; font-size: 14px; }
.section .ic path { stroke: #777; }
.quote td { height: 38px; border-bottom: 1px solid #ededed; }
.quote:nth-child(even) td { height: 37px; }
.mark { display: flex; align-items: center; gap: 5px; }
.coin { width: 23px; height: 23px; }
.coinline { fill: none; stroke: #fff; stroke-width: 1.8; }
.rise .tone, .tail { color: #35a08d; }
.fall .tone, .dn { color: #dd4450; }
.quote.active { outline: 2px solid #2e2e2e; outline-offset: -2px; border-radius: 7px; }

.detail { flex: 1; min-height: 0; padding: 9px 20px 0; background: #fff; }
.detailhead { display: flex; align-items: center; height: 40px; margin-right: -11px; }
.gold.big { width: 30px; height: 30px; margin-right: 10px; }
h2 { flex: 1; font-size: 16px; font-weight: 700; }
.detailhead button { width: 48px; }
.desc { margin-top: 10px; font-size: 15px; line-height: 28px; white-space: nowrap; }
.ext { width: 20px; height: 20px; vertical-align: middle; }
.ext path { stroke: #888; stroke-width: 2.4; }
.muted, .kind { color: #999; }
.kind { font-size: 15px; line-height: 26px; }
.price { display: flex; margin-top: 12px; height: 50px; align-items: flex-start; font-size: 36px; line-height: 50px; }
.price b { font-weight: 600; }
.price em { font-style: normal; color: #177f70; }
.price sup { font-size: 25px; line-height: 40px; font-weight: 600; color: #177f70; }
.price span { font-size: 13px; line-height: 66px; margin-left: 6px; }
.change { display: flex; gap: 12px; font-size: 19px; line-height: 26px; font-weight: 600; color: #1b7f70; margin-top: -2px; }
.open { display: flex; align-items: center; gap: 7px; padding-left: 6px; font-size: 15px; line-height: 26px; color: #2b907f; }
.open::before { content: ""; width: 10px; height: 10px; border-radius: 50%; background: #129a82; }
.news { margin-top: 14px; height: 112px; padding: 10px 6px 0 15px; border-radius: 9px; background: #e7e0f3; font-size: 14px; line-height: 20px; }
.newshead { display: flex; gap: 6px; margin-bottom: 5px; font-weight: 600; color: #777; }
.newshead b { color: #4a2a9c; }
.newshead i { font-style: normal; }
.news a { display: block; margin-top: 6px; color: #777; text-decoration: none; }

.rail { flex: 1; display: flex; flex-direction: column; justify-content: space-between; border-left: 1px solid #e3e3e3; }
.rail button { width: 45px; height: 47px; border-radius: 7px; }
.railtop, .railbottom { display: flex; flex-direction: column; align-items: center; }
.railtop { padding-top: 6px; gap: 10px; }
.railbottom { gap: 9px; padding-bottom: 7px; }
.rail .apps { height: 43px; width: 43px; margin: 4px 0; border-radius: 50%; background: #2e2e2e; }
.apps svg { width: 24px; height: 24px; fill: #fff; }
.rule { width: 42px; height: 1px; background: #dedede; margin-bottom: 3px; }
.handle { position: absolute; left: -3px; bottom: 73px; width: 10px; height: 33px; border: 1px solid #e0e0e0; border-radius: 5px; background: #fff; color: #888; }

.watermark { position: absolute; right: 7px; bottom: 7px; display: flex; align-items: center; gap: 5px; color: #fff; font-size: 24px; line-height: 36px; text-shadow: 1px 1px 1px #8a8a8a, 0 0 2px #aaa; pointer-events: none; }
.watermark svg { width: 28px; height: 28px; fill: #fff; filter: drop-shadow(1px 1px 1px #888); }
</style>
